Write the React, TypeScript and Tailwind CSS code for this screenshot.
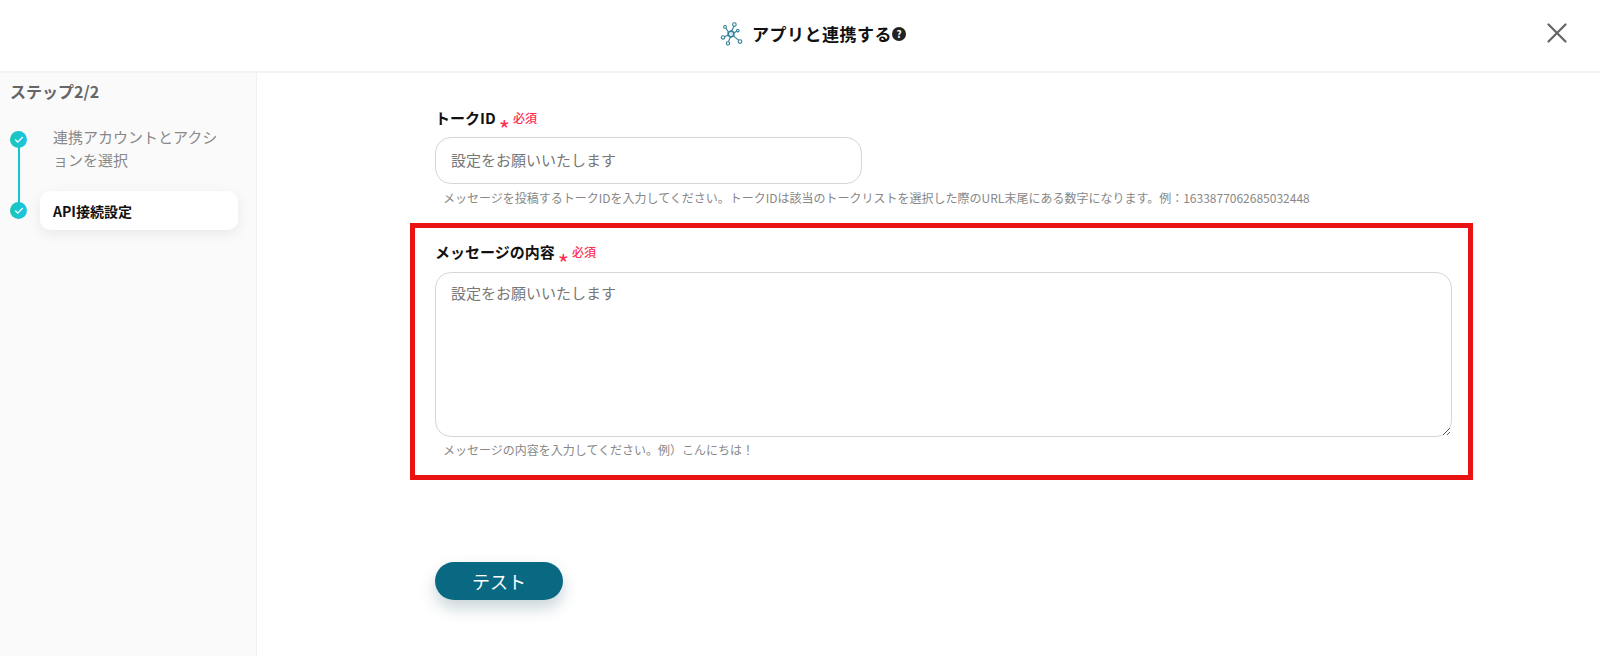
import React from 'react';
import { X, Check } from 'lucide-react';

const FONT = "font-['Noto_Sans_CJK_JP','Noto_Sans',sans-serif]";

const NetworkIcon = () => (
  <svg width="24" height="24" viewBox="0 0 24 24" fill="none" stroke="#2f7f97" strokeWidth="1.1">
    <path d="M12 8.8 14.8 10.4 14.8 13.6 12 15.2 9.2 13.6 9.2 10.4Z" fill="#cfe6ee" strokeWidth="1.6" />
    <path d="M12.6 9 15 4.2M9.6 10.2 6.8 6M14.8 11 17.6 9.2M14.4 13.8 20 18.6M11.4 15 9.4 19.8M9.2 13 5.6 14.8" />
    <circle cx="15.4" cy="2.6" r="1.8" fill="white" />
    <circle cx="6" cy="4.9" r="1.4" fill="white" />
    <circle cx="18.8" cy="8.6" r="1.3" fill="white" />
    <circle cx="21" cy="19.6" r="1.8" fill="white" />
    <circle cx="9" cy="21.4" r="1.6" fill="white" />
    <circle cx="4" cy="15.4" r="1.7" fill="white" />
  </svg>
);

const StepDot = () => (
  <span className="flex h-[17px] w-[17px] items-center justify-center rounded-full bg-gradient-to-r from-[#1cc5b5] to-[#1cc4e6]">
    <Check size={10} strokeWidth={3} className="text-white" />
  </span>
);

const FieldLabel = ({ text }: { text: string }) => (
  <div className="flex h-6 items-center text-[15px] font-bold leading-6 text-[#111]">
    {text}
    <span className="ml-[3px] mt-[11px] h-[14px] text-[24px] font-normal leading-[24px] text-[#ff2d4f]">*</span>
    <span className="ml-[3px] text-xs font-medium text-[#ff2d4f]">必須</span>
  </div>
);

export default function App() {
  return (
    <div className={`flex h-[656px] w-[1600px] flex-col overflow-hidden bg-white ${FONT}`}>
      {/* Header */}
      <header className="relative flex h-[73px] shrink-0 items-center justify-center border-b-2 border-[#f3f3f3] pb-1">
        <div className="ml-[25px] flex items-center">
          <NetworkIcon />
          <h1 className="ml-[9px] w-[140px] whitespace-nowrap text-[17px] font-bold tracking-[0.5px] text-[#111]">アプリと連携する</h1>
          <span className="flex h-[14px] w-[14px] items-center justify-center rounded-full bg-[#222] text-[10px] font-bold leading-none text-white">?</span>
        </div>
        <button className="absolute right-[26px] top-[16px] text-[#666]">
          <X size={34} strokeWidth={1.6} />
        </button>
      </header>

      <div className="flex flex-1">
        {/* Sidebar */}
        <aside className="w-[257px] shrink-0 border-r border-[#f0f0f0] bg-[#fafafa] pl-[10px] pt-[6px]">
          <div className="text-base font-bold leading-6 text-[#666]">ステップ2/2</div>
          <div className="relative mt-[22px]">
            <div className="absolute left-[8px] top-[14px] h-[72px] w-[2px] bg-[#10c8d0]" />
            <div className="relative flex">
              <div className="mt-[6px]"><StepDot /></div>
              <p className="ml-[26px] w-[170px] text-[15px] leading-[23px] text-[#888]">連携アカウントとアクションを選択</p>
            </div>
            <div className="relative mt-[20px] flex items-center">
              <StepDot />
              <div className="ml-[13px] flex h-[39px] w-[198px] items-center rounded-[10px] bg-white pl-[13px] text-sm font-bold text-[#111] shadow-[0_4px_14px_rgba(0,0,0,0.07)]">
                API接続設定
              </div>
            </div>
          </div>
        </aside>

        {/* Form */}
        <main className="flex-1 pl-[153px] pr-[127px] pt-[33px]">
          <div className="pl-[25px] pr-[21px]">
            <FieldLabel text="トークID" />
            <input
              className="mt-[7px] block h-[47px] w-[427px] rounded-2xl border border-[#d3d6db] px-[15px] pb-[2px] text-[15px] outline-none placeholder:text-[#777]"
              placeholder="設定をお願いいたします"
            />
            <p className="ml-2 mt-[4px] text-xs leading-5 text-[#888]">
              メッセージを投稿するトークIDを入力してください。トークIDは該当のトークリストを選択した際のURL末尾にある数字になります。例：1633877062685032448
            </p>
          </div>

          <div className="mt-[15px] h-[257px] border-[5px] border-[#ea1313] pl-[20px] pr-[16px] pt-[12px]">
            <FieldLabel text="メッセージの内容" />
            <textarea
              className="mt-[8px] block h-[165px] w-full rounded-2xl border border-[#d3d6db] px-[15px] pt-[8px] text-[15px] leading-6 outline-none placeholder:text-[#777]"
              placeholder="設定をお願いいたします"
            />
            <p className="ml-2 mt-[3px] text-xs leading-5 text-[#888]">メッセージの内容を入力してください。例）こんにちは！</p>
          </div>

          <button className="ml-[25px] mt-[82px] h-[38px] w-[128px] rounded-full bg-[#0a6982] text-lg text-white shadow-[0_8px_16px_rgba(10,60,80,0.22)]">
            テスト
          </button>
        </main>
      </div>
    </div>
  );
}
